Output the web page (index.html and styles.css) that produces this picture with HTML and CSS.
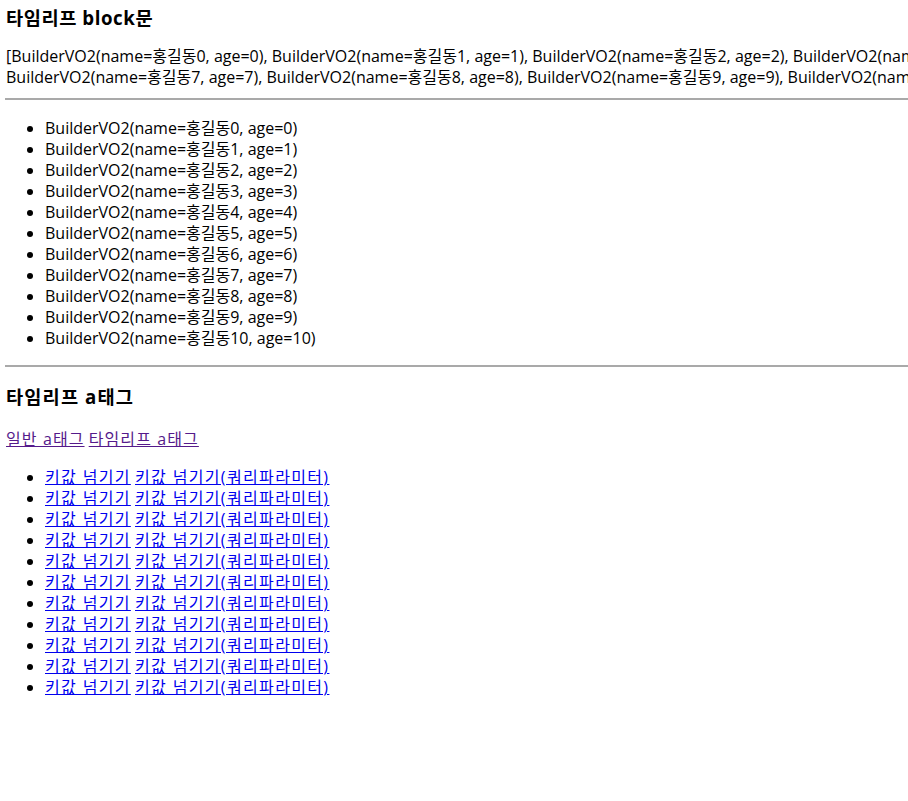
FILE: index.html
```html
<!DOCTYPE html>
<html lang="ko">
<head>
<meta charset="utf-8">
<title>타임리프</title>
<link rel="stylesheet" href="styles.css">
</head>
<body>
<h3 class="title">타임리프 block문</h3>
<p class="dump">[BuilderVO2(name=홍길동0, age=0), BuilderVO2(name=홍길동1, age=1), BuilderVO2(name=홍길동2, age=2), BuilderVO2(name=홍길동3, age=3), BuilderVO2(name=홍길동4, age=4), BuilderVO2(name=홍길동5, age=5), BuilderVO2(name=홍길동6, age=6), BuilderVO2(name=홍길동7, age=7), BuilderVO2(name=홍길동8, age=8), BuilderVO2(name=홍길동9, age=9), BuilderVO2(name=홍길동10, age=10)]</p>
<hr class="rule">
<ul class="list list-first">
<li>BuilderVO2(name=홍길동0, age=0)</li>
<li>BuilderVO2(name=홍길동1, age=1)</li>
<li>BuilderVO2(name=홍길동2, age=2)</li>
<li>BuilderVO2(name=홍길동3, age=3)</li>
<li>BuilderVO2(name=홍길동4, age=4)</li>
<li>BuilderVO2(name=홍길동5, age=5)</li>
<li>BuilderVO2(name=홍길동6, age=6)</li>
<li>BuilderVO2(name=홍길동7, age=7)</li>
<li>BuilderVO2(name=홍길동8, age=8)</li>
<li>BuilderVO2(name=홍길동9, age=9)</li>
<li>BuilderVO2(name=홍길동10, age=10)</li>
</ul>
<hr class="rule rule-second">
<h3 class="title title-second">타임리프 a태그</h3>
<p class="links"><a class="visited" href="#">일반 a태그</a> <a class="visited" href="#">타임리프 a태그</a></p>
<ul class="list">
<li><a class="link" href="#">키값 넘기기</a> <a class="link" href="#">키값 넘기기(쿼리파라미터)</a></li>
<li><a class="link" href="#">키값 넘기기</a> <a class="link" href="#">키값 넘기기(쿼리파라미터)</a></li>
<li><a class="link" href="#">키값 넘기기</a> <a class="link" href="#">키값 넘기기(쿼리파라미터)</a></li>
<li><a class="link" href="#">키값 넘기기</a> <a class="link" href="#">키값 넘기기(쿼리파라미터)</a></li>
<li><a class="link" href="#">키값 넘기기</a> <a class="link" href="#">키값 넘기기(쿼리파라미터)</a></li>
<li><a class="link" href="#">키값 넘기기</a> <a class="link" href="#">키값 넘기기(쿼리파라미터)</a></li>
<li><a class="link" href="#">키값 넘기기</a> <a class="link" href="#">키값 넘기기(쿼리파라미터)</a></li>
<li><a class="link" href="#">키값 넘기기</a> <a class="link" href="#">키값 넘기기(쿼리파라미터)</a></li>
<li><a class="link" href="#">키값 넘기기</a> <a class="link" href="#">키값 넘기기(쿼리파라미터)</a></li>
<li><a class="link" href="#">키값 넘기기</a> <a class="link" href="#">키값 넘기기(쿼리파라미터)</a></li>
<li><a class="link" href="#">키값 넘기기</a> <a class="link" href="#">키값 넘기기(쿼리파라미터)</a></li>
</ul>
</body>
</html>
```
FILE: styles.css
```css
html {
  overflow: hidden;
  background: #fff;
}
body {
  margin: 0;
  padding: 0 0 0 6px;
  width: 1900px;
  font-family: "Open Sans", "Noto Sans CJK KR", sans-serif;
  font-size: 16px;
  line-height: 21px;
  color: #000;
}
.title {
  font-size: 18.7px;
  line-height: 24px;
  font-weight: bold;
  letter-spacing: 0.55px;
  margin: 6px 0 16px;
}
.title-second {
  margin-top: 18px;
  margin-bottom: 20px;
  letter-spacing: 1.1px;
}
.dump {
  margin: 0;
}
.rule {
  border: none;
  border-top: 2px solid #a9a9a9;
  height: 0;
  margin: 10px 0 0 -1px;
}
.rule-second {
  margin-top: 16px;
}
.list {
  margin: 17px 0 0;
  padding-left: 39px;
}
.list-first {
  margin-top: 18px;
}
.links {
  margin: 0 0 16px;
}
.visited {
  color: #551a8b;
  letter-spacing: 1.1px;
}
.link {
  color: #0000ee;
  letter-spacing: 1.35px;
}
```
